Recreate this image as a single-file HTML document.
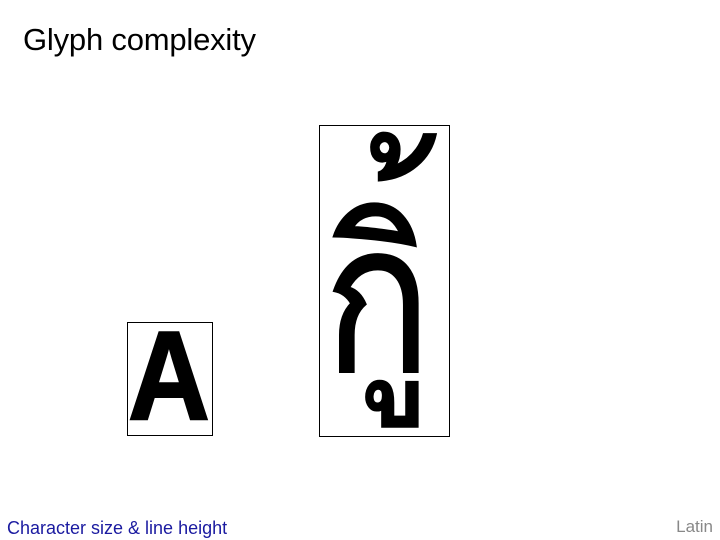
<!DOCTYPE html>
<html><head><meta charset="utf-8"><style>
body{margin:0;width:720px;height:540px;background:#fff;position:relative;overflow:hidden;font-family:"Liberation Sans",sans-serif}
.t{position:absolute;left:23px;top:22px;font-size:31px;color:#000;letter-spacing:-0.2px}
.box{position:absolute;border:1px solid #000;box-sizing:border-box}
.a{left:127px;top:322px;width:86px;height:114px}
.a span{position:absolute;left:-4px;top:-10px;font-weight:bold;font-size:126px;line-height:1;transform:scaleX(0.9);transform-origin:left top;display:block;width:100px;text-align:center;-webkit-text-stroke:2px #000}
.th{left:319px;top:125px;width:131px;height:312px}
.tf{font-family:'Liberation Sans','Loma','Garuda','Norasi','Noto Sans Thai','DejaVu Sans',sans-serif;font-size:210px;line-height:1;position:absolute;left:0;width:131px;text-align:center;transform:scaleX(0.85);white-space:nowrap;-webkit-text-stroke:2px #000}
.clip{position:absolute;left:319px;top:126px;width:131px;height:60px;overflow:hidden}
.f1{position:absolute;left:7px;top:518px;font-size:18px;color:#1a1aa0}
.f2{position:absolute;right:7px;top:517px;font-size:17px;color:#888}
</style></head><body>
<div class="t">Glyph complexity</div>
<div class="box a"><span>A</span></div>
<div class="box th"><span class="tf" style="top:69px;left:-8px">กิู</span></div>
<div class="clip"><span class="tf" style="top:5px;left:4px">ก้</span></div>
<div class="f1">Character size &amp; line height</div>
<div class="f2">Latin</div>
</body></html>
